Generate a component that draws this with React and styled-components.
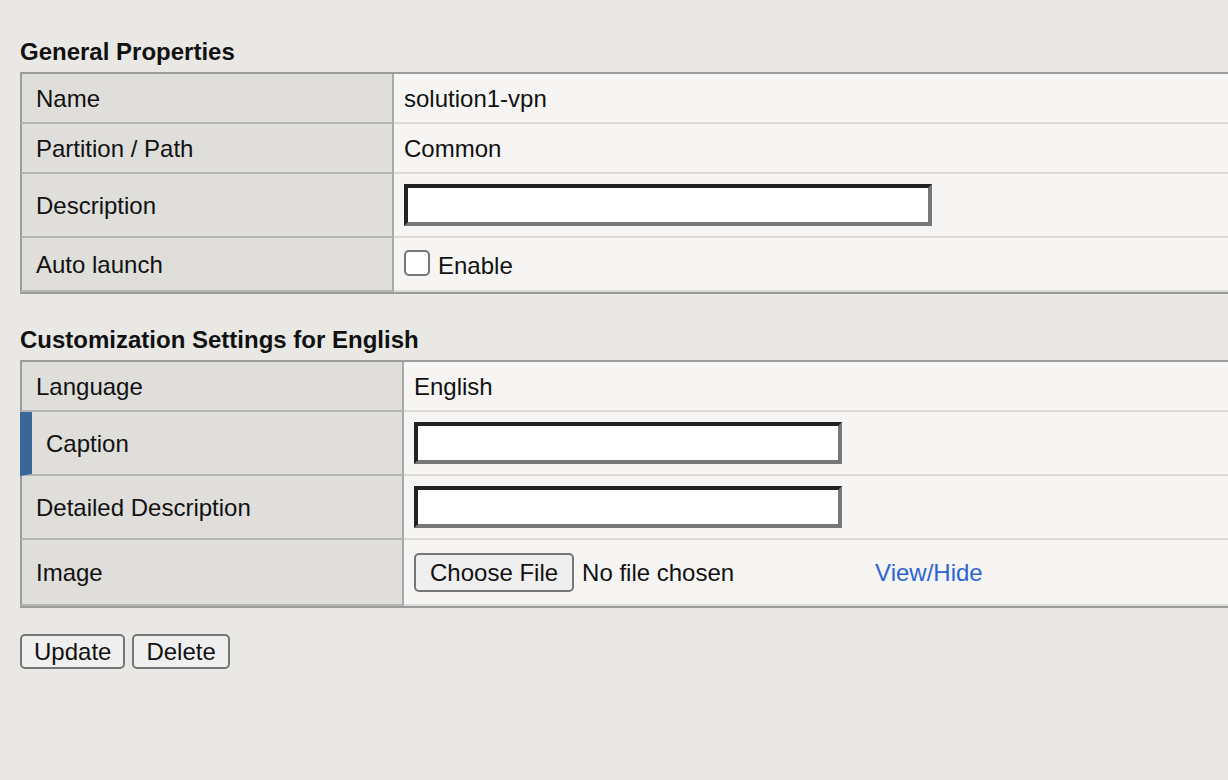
import React from 'react';
import styled, { createGlobalStyle } from 'styled-components';

const GlobalStyle = createGlobalStyle`
  html, body {
    margin: 0;
    padding: 0;
    background: #e9e8e5;
    overflow: hidden;
  }
  body {
    font-family: 'Liberation Sans', Arial, Helvetica, sans-serif;
    font-size: 24px;
    color: #111;
  }
  * {
    box-sizing: border-box;
  }
`;

const Page = styled.div`
  padding: 38px 0 40px 20px;
  width: 1228px;
  height: 780px;
  overflow: hidden;
`;

const Section = styled.section`
  margin-bottom: 32px;
`;

const Title = styled.h2`
  margin: 0 0 6px;
  font-size: 24px;
  line-height: 28px;
  font-weight: bold;
  color: #111;
`;

const Table = styled.div`
  width: 1240px;
  display: flex;
  flex-direction: column;
  border-top: 2px solid #9c9c9c;
  border-bottom: 2px solid #9c9c9c;
`;

const Row = styled.div`
  display: grid;
  grid-template-columns: ${(p) => p.$labelWidth}px 1fr;
  height: ${(p) => p.$height}px;
`;

const Label = styled.div`
  display: flex;
  align-items: center;
  background: #dfdedb;
  border-left: ${(p) => (p.$marked ? '12px solid #3a6799' : '2px solid #9c9c9c')};
  border-right: 2px solid #a9a9a9;
  border-bottom: 2px solid #b4b4b4;
  padding-left: 14px;
  padding-top: 1px;
`;

const Value = styled.div`
  display: flex;
  align-items: center;
  background: #f6f5f3;
  border-bottom: 2px solid #dcdbd8;
  padding-left: 10px;
  padding-top: 1px;
`;

const TextInput = styled.input`
  width: ${(p) => p.$width}px;
  height: 42px;
  margin-top: -1px;
  border-style: solid;
  border-width: 4px;
  border-color: #222 #777 #777 #222;
  background: #fff;
  font: inherit;
  padding: 0 6px;
  outline: none;
`;

const CheckLabel = styled.label`
  display: flex;
  align-items: center;
  gap: 8px;
  margin-top: 3px;
  cursor: pointer;
`;

const Checkbox = styled.input`
  appearance: none;
  -webkit-appearance: none;
  width: 26px;
  height: 26px;
  margin: -6px 0 0;
  border: 2px solid #767676;
  border-radius: 5px;
  background: #fff;
`;

const Button = styled.button`
  height: ${(p) => p.$height || 35}px;
  padding: 0 ${(p) => p.$pad || 12}px;
  border: 2px solid #767676;
  border-radius: 5px;
  background: #efefef;
  color: #111;
  font-family: inherit;
  font-size: 24px;
  line-height: 1;
  cursor: pointer;
`;

const FileStatus = styled.span`
  width: 301px;
  padding-left: 8px;
`;

const Link = styled.a`
  color: #2d64d3;
  text-decoration: none;
  margin-top: 1px;
`;

const Actions = styled.div`
  display: flex;
  gap: 7px;
  margin-top: -6px;
`;

export default function App() {
  return (
    <Page>
      <GlobalStyle />
      <Section>
        <Title>General Properties</Title>
        <Table>
          <Row $labelWidth={374} $height={50}>
            <Label>Name</Label>
            <Value>solution1-vpn</Value>
          </Row>
          <Row $labelWidth={374} $height={50}>
            <Label>Partition / Path</Label>
            <Value>Common</Value>
          </Row>
          <Row $labelWidth={374} $height={64}>
            <Label>Description</Label>
            <Value>
              <TextInput type="text" $width={528} />
            </Value>
          </Row>
          <Row $labelWidth={374} $height={54}>
            <Label>Auto launch</Label>
            <Value>
              <CheckLabel>
                <Checkbox type="checkbox" />
                Enable
              </CheckLabel>
            </Value>
          </Row>
        </Table>
      </Section>

      <Section>
        <Title>Customization Settings for English</Title>
        <Table>
          <Row $labelWidth={384} $height={50}>
            <Label>Language</Label>
            <Value>English</Value>
          </Row>
          <Row $labelWidth={384} $height={64}>
            <Label $marked>Caption</Label>
            <Value>
              <TextInput type="text" $width={428} />
            </Value>
          </Row>
          <Row $labelWidth={384} $height={64}>
            <Label>Detailed Description</Label>
            <Value>
              <TextInput type="text" $width={428} />
            </Value>
          </Row>
          <Row $labelWidth={384} $height={66}>
            <Label>Image</Label>
            <Value>
              <Button type="button" $height={39} $pad={14}>Choose File</Button>
              <FileStatus>No file chosen</FileStatus>
              <Link href="#">View/Hide</Link>
            </Value>
          </Row>
        </Table>
      </Section>

      <Actions>
        <Button type="button">Update</Button>
        <Button type="button">Delete</Button>
      </Actions>
    </Page>
  );
}
